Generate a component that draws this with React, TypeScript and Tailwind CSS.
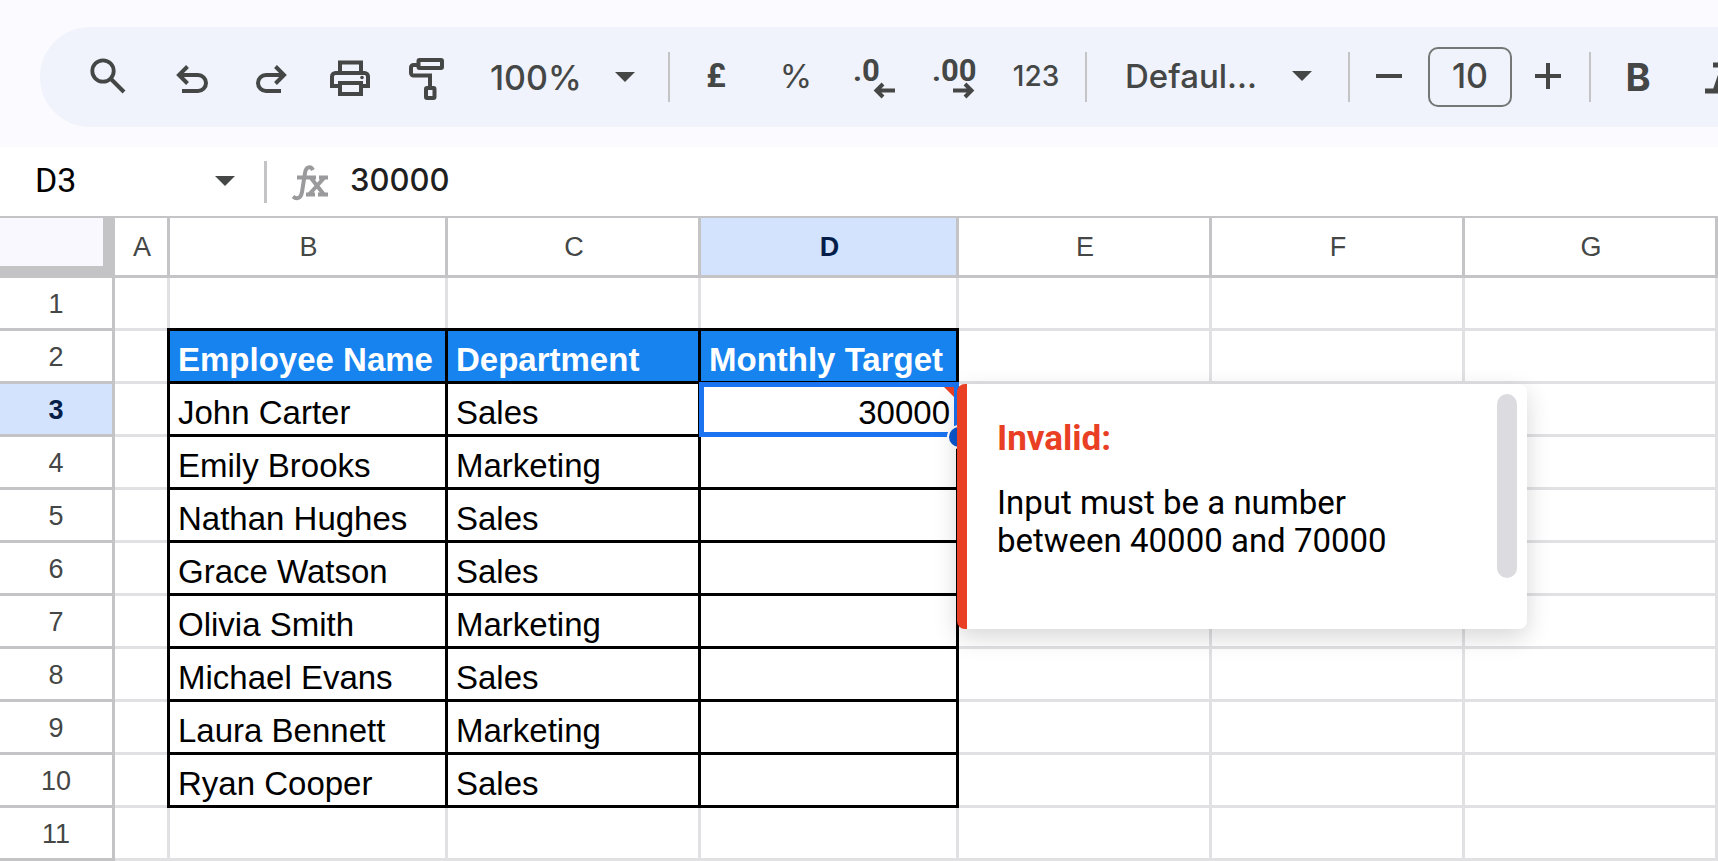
import type { ReactNode } from "react";

interface Row {
  n: number;
  cells: string[];
}

const COLUMNS = ["A", "B", "C", "D", "E", "F", "G"];

const ROWS: Row[] = [
  { n: 1, cells: [] },
  { n: 2, cells: ["", "Employee Name", "Department", "Monthly Target"] },
  { n: 3, cells: ["", "John Carter", "Sales", "30000"] },
  { n: 4, cells: ["", "Emily Brooks", "Marketing"] },
  { n: 5, cells: ["", "Nathan Hughes", "Sales"] },
  { n: 6, cells: ["", "Grace Watson", "Sales"] },
  { n: 7, cells: ["", "Olivia Smith", "Marketing"] },
  { n: 8, cells: ["", "Michael Evans", "Sales"] },
  { n: 9, cells: ["", "Laura Bennett", "Marketing"] },
  { n: 10, cells: ["", "Ryan Cooper", "Sales"] },
  { n: 11, cells: [] },
];

function ToolButton({ label, children }: { label: string; children: ReactNode }) {
  return (
    <button type="button" aria-label={label} className="flex h-full w-20 shrink-0 items-center justify-center">
      {children}
    </button>
  );
}

function Icon({ children }: { children: ReactNode }) {
  return (
    <svg viewBox="0 0 48 48" className="size-12" fill="none" stroke="currentColor" strokeWidth="4">
      {children}
    </svg>
  );
}

function Caret({ className }: { className?: string }) {
  return (
    <svg viewBox="0 0 20 10" className={`h-[10px] w-5 ${className ?? ""}`} fill="currentColor">
      <path d="M0 0h20L10 10z" />
    </svg>
  );
}

function Divider({ className }: { className: string }) {
  return <div className={`h-[50px] w-[2px] shrink-0 bg-[#c4c4c6] ${className}`} />;
}

function Toolbar() {
  return (
    <div className="overflow-hidden bg-[#fafaff] pt-[27px] pb-5 pl-10">
      <div className="flex h-[100px] items-center rounded-l-full bg-[#f0f3fb] pl-[30px] text-[#444746]">
        <ToolButton label="Search">
          <Icon>
            <circle cx="17" cy="18" r="10.7" strokeWidth="3.8" />
            <path d="M24.5 25.5 38 39" />
          </Icon>
        </ToolButton>
        <ToolButton label="Undo">
          <Icon>
            <path d="M16 38h16a8 8 0 0 0 0-16H14M21.5 13.5 13 22l8.500 8.500" />
          </Icon>
        </ToolButton>
        <ToolButton label="Redo">
          <Icon>
            <path d="M35 38H20a8 8 0 0 1 0-16h18M29.5 13.5 38 22l-8.500 8.500" />
          </Icon>
        </ToolButton>
        <ToolButton label="Print">
          <Icon>
            <path d="M14 20V9.500h21V20M14 33H6V23.500a3.500 3.500 0 0 1 3.500-3.500h29a3.500 3.500 0 0 1 3.500 3.500V33h-7M14 30h21v11H14z" />
            <circle cx="36" cy="24.5" r="1.800" fill="currentColor" stroke="none" />
          </Icon>
        </ToolButton>
        <ToolButton label="Paint format">
          <Icon>
            <rect x="12.5" y="7" width="23.5" height="8" rx="1" />
            <path d="M12 12H7.500a2.500 2.500 0 0 0-2.500 2.500V20a2.500 2.500 0 0 0 2.500 2.500H24V34" />
            <rect x="20" y="35" width="8.500" height="10" rx="1" />
          </Icon>
        </ToolButton>

        <div className="relative ml-5 w-[145px] shrink-0">
          <select
            aria-label="Zoom"
            className="w-full appearance-none bg-transparent pt-[2px] font-[Inter,sans-serif] text-[34px] leading-10 font-medium"
          >
            <option>100%</option>
          </select>
          <Caret className="pointer-events-none absolute top-4 right-0" />
        </div>
        <Divider className="ml-[33px] mr-[6px]" />

        <ToolButton label="Format as currency">
          <span className="pb-[3px] font-[Roboto,sans-serif] text-[33px] leading-10 font-bold">£</span>
        </ToolButton>
        <ToolButton label="Format as percent">
          <span className="pb-[3px] font-[Inter,sans-serif] text-[33px] leading-10">%</span>
        </ToolButton>
        <ToolButton label="Decrease decimal places">
          <Icon>
            <text x="1" y="28" fill="currentColor" stroke="none" className="font-[Roboto,sans-serif] text-[31px] font-bold">
              .0
            </text>
            <path d="M43 37.500H26M31 31l-6.500 6.500L31 44" />
          </Icon>
        </ToolButton>
        <ToolButton label="Increase decimal places">
          <Icon>
            <text x="0" y="28" fill="currentColor" stroke="none" className="font-[Roboto,sans-serif] text-[31px] font-bold">
              .00
            </text>
            <path d="M21 37.500h17M33 31l6.500 6.500L33 44" />
          </Icon>
        </ToolButton>
        <ToolButton label="More formats">
          <span className="pb-[3px] font-[Inter,sans-serif] text-[28px] leading-10 font-medium">123</span>
        </ToolButton>
        <Divider className="ml-[9px] mr-[38px]" />

        <div className="relative w-[187px] shrink-0">
          <select
            aria-label="Font"
            className="w-full appearance-none bg-transparent pb-[3px] font-[Inter,sans-serif] text-[33px] leading-10 font-medium"
          >
            <option>Defaul...</option>
          </select>
          <Caret className="pointer-events-none absolute top-[15px] right-0" />
        </div>
        <Divider className="ml-9" />

        <button type="button" aria-label="Decrease font size" className="flex h-full w-[78px] shrink-0 items-center justify-center">
          <Icon>
            <path d="M11 23h26" />
          </Icon>
        </button>
        <input
          aria-label="Font size"
          defaultValue="10"
          className="h-[60px] w-[84px] shrink-0 rounded-[10px] border-2 border-[#747775] bg-transparent pb-[3px] text-center font-[Inter,sans-serif] text-[34px] font-medium"
        />
        <button type="button" aria-label="Increase font size" className="flex h-full w-[72px] shrink-0 items-center justify-center">
          <Icon>
            <path d="M11 23h26M24 10v26" />
          </Icon>
        </button>
        <Divider className="ml-[5px] mr-[7px]" />
        <ToolButton label="Bold">
          <span className="font-[Inter,sans-serif] text-[38px] leading-10 font-bold">B</span>
        </ToolButton>
        <ToolButton label="Italic">
          <Icon>
            <path d="M19 12h20M11 38h20M30 12l-9 26" strokeWidth="5" />
          </Icon>
        </ToolButton>
      </div>
    </div>
  );
}

function FormulaBar() {
  return (
    <div className="flex h-[69px] items-center bg-white">
      <div className="relative ml-[35px] w-[200px] shrink-0">
        <input
          aria-label="Name box"
          defaultValue="D3"
          className="w-full bg-transparent pb-1 font-[Roboto,sans-serif] text-[34px] leading-10 text-black"
        />
        <Caret className="pointer-events-none absolute top-4 right-0 text-[#444746]" />
      </div>
      <div className="ml-[29px] h-[42px] w-[3px] shrink-0 bg-[#c4c4c6]" />
      <svg viewBox="0 0 40 40" className="ml-[23px] size-10 shrink-0 text-[#9a9a9c]" fill="none" stroke="currentColor" strokeWidth="4">
        <path d="M23 8C21 4 16 4 15 11L12 30c-1 6-5 8-9 4.500" />
        <path d="M7 15.500h19M29 15.500h9M16 32.500h9M28 32.500h10M21 16l12.500 16M34 16 19.500 32" />
      </svg>
      <input
        aria-label="Formula"
        defaultValue="30000"
        className="ml-5 min-w-0 flex-1 bg-transparent pb-1 font-[Inter,sans-serif] text-[31px] leading-10 font-medium text-[#1f1f1f]"
      />
    </div>
  );
}

function InvalidNote() {
  return (
    <div
      role="alert"
      className="absolute top-0 left-[calc(100%+1px)] z-20 flex h-[245px] w-[570px] justify-between rounded-lg border-l-[10px] border-[#e94025] bg-white pt-[10px] pr-[10px] pl-[30px] text-left font-[Roboto,sans-serif] text-[33px] leading-[38px] whitespace-normal text-black shadow-[0_8px_24px_rgba(0,0,0,0.16)]"
    >
      <div className="w-[400px] pt-[26px]">
        <p className="text-[35px] font-bold text-[#e94025]">Invalid:</p>
        <p className="mt-[26px]">Input must be a number between 40000 and 70000</p>
      </div>
      <div className="h-[184px] w-5 rounded-full bg-[#dcdbe0]" />
    </div>
  );
}

// Everything that floats over the active cell: frame, fill handle, error flag, note
function Selection() {
  return (
    <>
      <div className="absolute -top-[2px] -right-[3px] -bottom-[3px] -left-[2px] border-[5px] border-[#1a73f0]" />
      <svg viewBox="0 0 10 10" className="absolute top-[3px] right-[2px] size-[10px] fill-[#e94025]">
        <path d="M0 0h10v10z" />
      </svg>
      <div className="absolute -right-[15px] -bottom-[15px] size-6 rounded-full border-2 border-white bg-[#0b57d0]" />
      <InvalidNote />
    </>
  );
}

function Cell({ row, col }: { row: Row; col: number }) {
  const inTable = row.n >= 2 && row.n <= 10 && col >= 1 && col <= 3;
  const header = inTable && row.n === 2;
  const active = row.n === 3 && col === 3;

  let look = "border-[#e1e0e3] bg-white";
  if (inTable) look = "border-black shadow-[-3px_-3px_0_#000,-3px_0_0_#000] bg-white";
  if (header) look = "border-black shadow-[-3px_-3px_0_#000,0_-3px_0_#000] bg-[#1683ee] font-bold text-white";

  return (
    <td className={`h-[53px] border-r-[3px] border-b-[3px] pt-[7px] pr-[6px] pl-2 whitespace-nowrap ${look} ${active ? "relative text-right" : "text-left"}`}>
      {row.cells[col]}
      {active && <Selection />}
    </td>
  );
}

function Sheet() {
  return (
    <table className="w-full min-w-[1718px] table-fixed border-separate border-spacing-0 border-t-2 border-[#c4c3c6] text-[33px] leading-10 text-black">
      <colgroup>
        <col className="w-[115px]" />
        <col className="w-[55px]" />
        <col className="w-[278px]" />
        <col className="w-[253px]" />
        <col className="w-[258px]" />
        <col className="w-[253px]" />
        <col className="w-[253px]" />
        <col />
      </colgroup>
      <thead>
        <tr className="text-[27px] leading-8">
          <td className="h-[60px] border-r-[12px] border-b-[12px] border-[#c4c3c6] bg-[#f8f8fe] p-0" />
          {COLUMNS.map((name) => (
            <th
              key={name}
              scope="col"
              className={`border-r-[3px] border-b-[3px] border-[#c4c3c6] p-0 pl-[2px] ${name === "D" ? "bg-[#d3e3fd] font-bold text-[#041e49]" : "bg-white font-normal text-[#444746]"}`}
            >
              {name}
            </th>
          ))}
        </tr>
      </thead>
      <tbody>
        {ROWS.map((row) => (
          <tr key={row.n}>
            <th
              scope="row"
              className={`border-r-[3px] border-b-[3px] border-[#c4c3c6] p-0 pt-[2px] text-[27px] leading-8 ${row.n === 3 ? "bg-[#d3e3fd] font-bold text-[#041e49]" : "bg-white font-normal text-[#444746]"}`}
            >
              {row.n}
            </th>
            {COLUMNS.map((name, col) => (
              <Cell key={name} row={row} col={col} />
            ))}
          </tr>
        ))}
      </tbody>
    </table>
  );
}

export default function App() {
  return (
    <main className="overflow-hidden bg-white font-['Liberation_Sans',Arial,sans-serif]">
      <Toolbar />
      <FormulaBar />
      <Sheet />
    </main>
  );
}
